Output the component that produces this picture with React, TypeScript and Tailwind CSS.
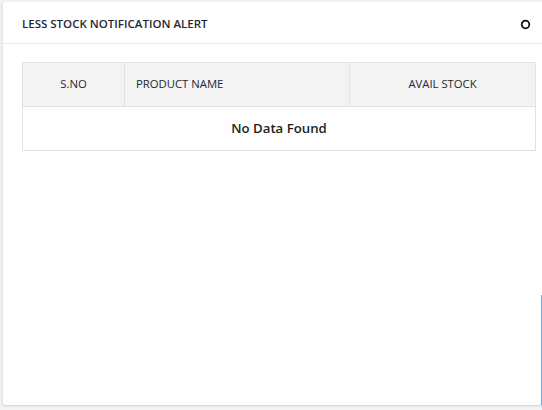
import React from "react";

export default function App() {
  return (
    <div className="w-[542px] h-[410px] bg-[#f3f3f3] pt-[2px] pl-[2px] overflow-hidden" style={{ fontFamily: '"Open Sans", "Noto Sans", sans-serif' }}>
      <div className="relative h-[403px] bg-white rounded-l-[3px] border-l border-[#e6e6e6] shadow-[0_1px_2px_rgba(0,0,0,0.15)]">
        <div className="flex items-center justify-between h-[42px] pt-[3px] pl-[19px] pr-[11px] border-b border-[#ececec]">
          <span className="text-[11.5px] font-semibold text-[#1f2733]">LESS STOCK NOTIFICATION ALERT</span>
          <svg width="11" height="11" viewBox="0 0 11 11">
            <circle cx="5.5" cy="5.5" r="3.8" fill="none" stroke="#111" strokeWidth="1.8" />
          </svg>
        </div>
        <div className="pt-[18px] pl-[19px] pr-[5px]">
          <table className="w-[514px] border-collapse border border-[#e2e2e2] text-[#262633]">
            <thead>
              <tr className="bg-[#f3f3f3] h-[44px]">
                <th className="w-[102px] border border-[#e2e2e2] text-[11.3px] font-normal text-center">S.NO</th>
                <th className="w-[225px] border border-[#e2e2e2] text-[11.3px] font-normal text-left pl-[11px]">PRODUCT NAME</th>
                <th className="border border-[#e2e2e2] text-[11.3px] font-normal text-center">AVAIL STOCK</th>
              </tr>
            </thead>
            <tbody>
              <tr className="h-[44px]">
                <td colSpan={3} className="text-center text-[13.2px] font-semibold text-[#222]">No Data Found</td>
              </tr>
            </tbody>
          </table>
        </div>
        <div className="absolute right-0 top-[293px] bottom-0 w-[1px] bg-[#6fb3e0]" />
      </div>
    </div>
  );
}
